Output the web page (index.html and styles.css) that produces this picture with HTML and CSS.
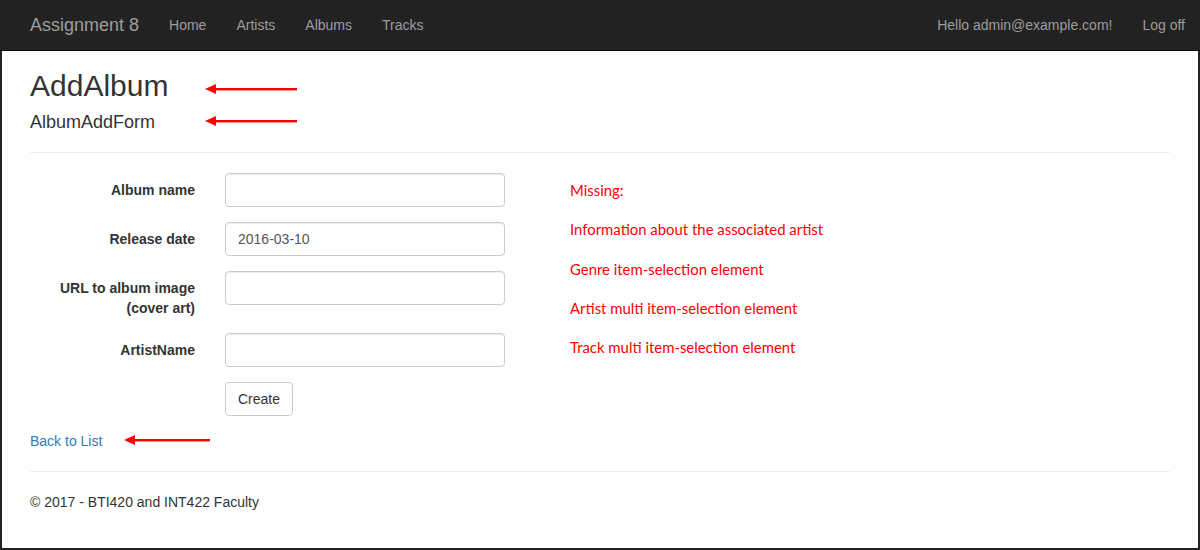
FILE: index.html
```html
<!DOCTYPE html>
<html>
<head>
<meta charset="utf-8">
<title>AddAlbum</title>
<link rel="stylesheet" href="styles.css">
</head>
<body>
<nav class="navbar">
  <div class="nav-left">
    <a class="brand" href="#">Assignment 8</a>
    <a class="nav-link" href="#">Home</a>
    <a class="nav-link" href="#">Artists</a>
    <a class="nav-link" href="#">Albums</a>
    <a class="nav-link" href="#">Tracks</a>
  </div>
  <div class="nav-right">
    <a class="nav-link" href="#">Hello admin@example.com!</a>
    <a class="nav-link" href="#">Log off</a>
  </div>
</nav>
<div class="page">
  <div class="container">
    <h2 class="title">AddAlbum</h2>
    <h4 class="subtitle">AlbumAddForm</h4>
    <hr class="rule">
    <div class="main">
      <form class="form">
        <div class="form-group">
          <label class="label">Album name</label>
          <div class="field"><input class="input" type="text" value=""></div>
        </div>
        <div class="form-group">
          <label class="label">Release date</label>
          <div class="field"><input class="input" type="text" value="2016-03-10"></div>
        </div>
        <div class="form-group">
          <label class="label">URL to album image (cover art)</label>
          <div class="field"><input class="input" type="text" value=""></div>
        </div>
        <div class="form-group">
          <label class="label">ArtistName</label>
          <div class="field"><input class="input" type="text" value=""></div>
        </div>
        <div class="form-group">
          <div class="label"></div>
          <div class="field"><button class="btn" type="button">Create</button></div>
        </div>
      </form>
      <ul class="notes">
        <li>Missing:</li>
        <li>Information about the associated artist</li>
        <li>Genre item-selection element</li>
        <li>Artist multi item-selection element</li>
        <li>Track multi item-selection element</li>
      </ul>
    </div>
    <div class="back"><a href="#" class="link">Back to List</a></div>
    <hr class="rule">
    <footer class="footer">© 2017 - BTI420 and INT422 Faculty</footer>

    <svg class="arrow arrow-1" width="92" height="12" viewBox="0 0 92 12"><path d="M0 6 L11 1 L11 11 Z" fill="#f00"/><rect x="10" y="5" width="82" height="2.4" fill="#f00"/></svg>
    <svg class="arrow arrow-2" width="92" height="12" viewBox="0 0 92 12"><path d="M0 6 L11 1 L11 11 Z" fill="#f00"/><rect x="10" y="5" width="82" height="2.4" fill="#f00"/></svg>
    <svg class="arrow arrow-3" width="86" height="12" viewBox="0 0 86 12"><path d="M0 6 L11 1 L11 11 Z" fill="#f00"/><rect x="10" y="5" width="76" height="2.4" fill="#f00"/></svg>
  </div>
</div>
</body>
</html>
```
FILE: styles.css
```css
* { box-sizing: border-box; }
html, body { margin: 0; padding: 0; }
body {
  width: 1200px;
  height: 550px;
  overflow: hidden;
  font-family: "Liberation Sans", Arial, sans-serif;
  font-size: 14px;
  line-height: 20px;
  color: #333;
  background: #222;
}
.navbar {
  height: 51px;
  background: #222;
  border-bottom: 1px solid #080808;
  display: flex;
  justify-content: space-between;
  padding-left: 15px;
}
.nav-left, .nav-right { display: flex; align-items: flex-start; }
.brand {
  font-size: 18px;
  line-height: 20px;
  padding: 15px;
  color: #9d9d9d;
  text-decoration: none;
}
.nav-link {
  font-size: 14px;
  line-height: 20px;
  padding: 15px;
  color: #9d9d9d;
  text-decoration: none;
}
.page {
  height: 499px;
  background: #fff;
  border-left: 2px solid #222;
  border-right: 2px solid #222;
  border-bottom: 2px solid #222;
}
.container {
  position: relative;
  width: 1170px;
  margin: 0 auto;
  padding: 18px 15px 0;
}
.title {
  font-size: 30px;
  line-height: 33px;
  font-weight: 500;
  margin: 0 0 10px;
}
.subtitle {
  font-size: 18px;
  line-height: 20px;
  font-weight: 500;
  margin: 10px 0 0;
}
.rule {
  border: 0;
  border-top: 1px solid #eee;
  margin: 20px 0;
}
.main { display: flex; }
.form { width: 540px; }
.form-group {
  display: flex;
  margin: 0 0 15px -15px;
}
.label {
  width: 195px;
  padding: 7px 15px 0;
  text-align: right;
  font-weight: bold;
}
.field { padding: 0 15px; }
.input {
  display: block;
  width: 280px;
  height: 34px;
  padding: 6px 12px;
  font-family: "Liberation Sans", Arial, sans-serif;
  font-size: 14px;
  color: #555;
  background: #fff;
  border: 1px solid #ccc;
  border-radius: 4px;
  box-shadow: inset 0 1px 1px rgba(0,0,0,.075);
}
.btn {
  height: 34px;
  padding: 6px 12px;
  font-family: "Liberation Sans", Arial, sans-serif;
  font-size: 14px;
  line-height: 20px;
  color: #333;
  background: #fff;
  border: 1px solid #ccc;
  border-radius: 4px;
}
.notes {
  list-style: none;
  margin: -2px 0 0;
  padding: 0;
  color: #f00;
  font-family: Lato, "Open Sans", sans-serif;
  font-size: 14.9px;
  line-height: 39.25px;
}
.back { line-height: 20px; }
.link { color: #337ab7; text-decoration: none; }
.footer { line-height: 20px; }
.arrow { position: absolute; }
.arrow-1 { left: 190px; top: 32px; }
.arrow-2 { left: 190px; top: 64px; }
.arrow-3 { left: 109px; top: 383px; }
```
